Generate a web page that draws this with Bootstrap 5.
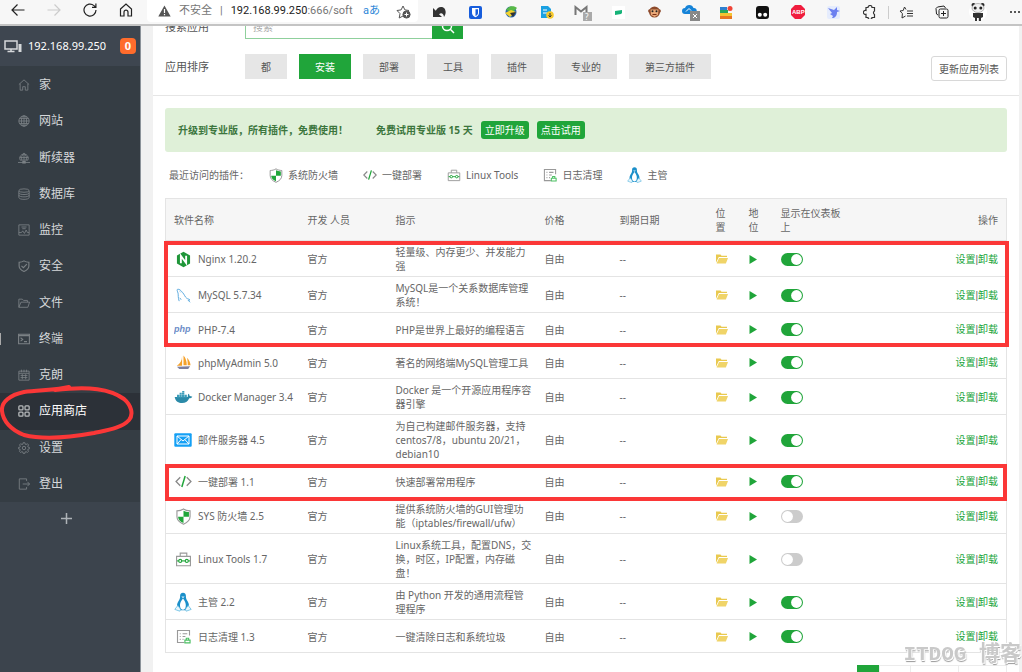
<!DOCTYPE html>
<html lang="zh-CN">
<head>
<meta charset="utf-8">
<meta name="viewport" content="width=device-width, initial-scale=1">
<title>软件商店</title>
<link href="https://cdn.jsdelivr.net/npm/bootstrap@5.3.0/dist/css/bootstrap.min.css" rel="stylesheet">
<style>
  :root { --green: #20a53a; --line: #e4e4e4; --red: #fb3737; }
  body { height: 100vh; overflow: hidden; font: 10px/14px "Noto Sans", "Noto Sans CJK SC", sans-serif; color: #666; background: #f1f1f1; }
  svg { display: block; flex: none; }
  a { text-decoration: none; }
  button { font: inherit; line-height: 14px; }

  /* browser bar */
  .chrome { height: 26px; background: #f7f7f7; border-bottom: 2px solid #c4c4c4; flex: none; }
  .chrome button { border: 0; background: none; padding: 0; height: 20px; color: #222; display: flex; align-items: center; justify-content: center; }
  .nav-btns { width: 144px; }
  .nav-btns button { width: 36px; }
  .address { flex: 253 1 0; height: 22px; margin-left: 3px; padding: 0 7px 0 11px; border-radius: 0 0 4px 4px; font: 11px/14px Roboto, "Noto Sans CJK SC", sans-serif; color: #767676; white-space: nowrap; }
  .address b { font-weight: 400; color: #222; }
  .translate { color: #2c86d8; }
  .exts { flex: 600 1 0; padding-left: 4px; }
  .exts button { flex: 1 1 0; }
  .exts button:last-child { flex: 0 0 26px; justify-content: flex-end; }
  .exts .after-sep { border-left: 1px solid #ccc; height: 13px; }

  /* sidebar */
  .side { width: 141px; flex: none; background: #3c444d; border-right: 1px solid #8b9299; position: relative; }
  .side-head { height: 40px; padding: 0 4px; gap: 6px; background: #3e4650; font-size: 11px; color: #fff; }
  .count { width: 16px; height: 16px; line-height: 16px; border-radius: 4px; background: #ff6c2c; font-weight: 700; text-align: center; }
  .menu { height: 436px; padding-top: 1px; background: #353d44; }
  .menu a { flex: 1 1 0; padding-left: 18px; gap: 9px; font-size: 12px; color: #d6d8da; position: relative; }
  .menu svg { color: #7b8185; width: 12px; height: 12px; }
  .menu a.on { background: #2c3138; color: #fff; }
  .menu a.on svg { color: #b6b9bb; }
  .menu a.tick::before { content: ""; position: absolute; left: 0; width: 1px; height: 12px; background: #aaa; }
  .plus { width: 100%; height: 32px; border: 0; background: none; padding: 0 8px 0 0; display: flex; align-items: center; justify-content: center; }
  .ring { position: absolute; left: -2px; top: 356px; pointer-events: none; }

  /* content */
  .panel { margin: 0 3px 0 12px; background: #fff; min-width: 0; }
  .head-area { padding: 0 12px 14px; margin-top: -12px; border-bottom: 1px solid #e6e6e6; }
  .lbl { width: 80px; font-size: 11px; line-height: 25px; color: #555; }
  .search input { width: 187px; height: 25px; border: 1px solid #8fd09c; border-right: 0; padding: 0 7px; font-size: 10px; outline: 0; }
  .search input::placeholder { color: #aaa; }
  .search button { width: 31px; height: 25px; border: 0; background: var(--green); display: flex; align-items: center; justify-content: center; padding: 0; }
  .sorting { margin-top: 15px; }
  .filters { gap: 12px; }
  .filters button { border: 0; height: 25px; padding: 0 16px; background: #e6e6e6; color: #555; }
  .filters button.on { background: var(--green); color: #fff; }
  .refresh { height: 25px; margin-top: 2px; padding: 0 7px; border: 1px solid #d8d8d8; border-radius: 3px; background: #fff; color: #555; }
  .body-area { padding: 12px; }
  .promo { height: 44px; padding: 0 13px; background: #dff0d8; border-radius: 3px; color: #3c763d; font-weight: 700; }
  .trial { margin: 0 8px 0 28px; }
  .promo button { height: 18px; padding: 0 4px; border: 0; border-radius: 3px; background: var(--green); color: #fff; font-weight: 400; line-height: 18px; }
  .recent { height: 46px; padding-left: 4px; gap: 25px; }
  .recent > span { width: 75px; white-space: nowrap; }
  .recent a { color: #666; gap: 5px; }
  .soft { table-layout: fixed; width: 100%; border: 1px solid var(--line); border-collapse: collapse; }
  .soft th { height: 42px; background: #f6f6f6; font-weight: 400; padding: 0 8px; }
  .soft td { padding: 4px 0 3px 8px; height: 33px; border-top: 1px solid var(--line); vertical-align: middle; white-space: nowrap; }
  .soft td:last-child { padding-right: 8px; }
  .soft td a { color: var(--green); }
  .bar { font-family: "Liberation Sans", sans-serif; }
  .ic { width: 18px; height: 18px; display: flex; align-items: center; justify-content: center; margin: -2px 6px -2px 0; }
  .soft td .form-check-input { appearance: none; width: 22px; height: 13px; margin: 0; border: 0; border-radius: 7px; display: block; float: none; box-shadow: none;
    background: #ccc url("data:image/svg+xml,%3Csvg xmlns='http://www.w3.org/2000/svg' viewBox='0 0 12 12'%3E%3Ccircle cx='6' cy='6' r='5' fill='white'/%3E%3C/svg%3E") left center / 13px 13px no-repeat; }
  .soft td .form-check-input:checked { background-color: var(--green); background-position: right center; }
  .frame-red { position: absolute; border: 4px solid var(--red); pointer-events: none; }
  .frame-a { left: -1px; right: -2px; top: 43px; height: 106px; }
  .frame-b { left: 0; right: 0; top: 266px; height: 37px; }
  .pages { margin-top: 12px; }
  .pages a { border: 1px solid #ececec; height: 28px; line-height: 28px; text-align: center; color: #666; margin-left: -1px; width: 49px; }
  .pages a.on { background: var(--green); border-color: var(--green); color: #fff; width: 23px; }
  .pages a.next { width: 32px; }
  .stamp { position: fixed; right: 1px; bottom: 5px; font: 700 21px/24px "Liberation Mono", "Noto Sans CJK SC", monospace; color: #c9c9c9; text-shadow: 1px 1px 0 #fff, -1px -1px 0 #fff, 1px 2px 1px #999; white-space: nowrap; }
</style>
</head>
<body class="d-flex flex-column">

<svg width="0" height="0" class="position-absolute" aria-hidden="true">
  <symbol id="shield" viewBox="0 0 16 18"><path d="M8 1C6 2.400 3.500 2.900 1 3v6c0 4 3 6.500 7 8.200C12 15.500 15 13 15 9V3C12.500 2.900 10 2.400 8 1z" fill="#fff" stroke="#999" stroke-width="1.200"/><path d="M8 2.800c1.700.9 3.700 1.300 5.800 1.400v5H8zM2.200 9.200H8V16c-3.500-1.600-5.700-3.600-5.800-6.800z" fill="#20a53a"/></symbol>
  <symbol id="code" viewBox="0 0 18 14"><path d="M5.500 2.500L1 7l4.500 4.500M12.500 2.500L17 7l-4.500 4.500" fill="none" stroke="#888" stroke-width="1.400"/><path d="M10.800 1L7.200 13" stroke="#20a53a" stroke-width="1.600"/></symbol>
  <symbol id="box" viewBox="0 0 18 16"><path d="M1.600 4.600h14.800v10H1.600zM5.500 4.500V1.200h7v3.300" fill="#fff" stroke="#999" stroke-width="1.200"/><path d="M2 9.500h14" stroke="#20a53a" stroke-width="1.200"/><circle cx="5.500" cy="9.500" r="1.600" fill="#fff" stroke="#20a53a" stroke-width="1.200"/><circle cx="12.500" cy="9.500" r="1.600" fill="#fff" stroke="#20a53a" stroke-width="1.200"/></symbol>
  <symbol id="log" viewBox="0 0 16 16"><path d="M9 14.400H1.600V1.600h12.800V7M4 5h1m2 0h5M4 8h1m2 0h3M4 11h1m2 0h1" fill="none" stroke="#999" stroke-width="1.200"/><path d="M9.500 14.800v-3h5.500v3zM11 11.500V9.800h2.500v1.700" fill="#fff" stroke="#4cc063" stroke-width="1.200"/></symbol>
  <symbol id="tux" viewBox="0 0 18 20"><path d="M9 .8c-2 0-3 1.400-2.900 3.200.1 2.200-.5 3.300-1.700 5.200C3.200 11 2.800 13 3.200 15l3 3.300h5.600l3-3.300c.4-2 0-4-1.200-5.800-1.200-1.900-1.800-3-1.700-5.200C12 2.200 11 .8 9 .8z" fill="#1b8fc9"/><path d="M9 6.500C7.200 9 5.700 11 6 14c.3 2.600 1.500 3.700 3 3.700s2.500-1.100 2.800-3.700C12 11 10.800 9 9 6.500z" fill="#fff"/><path d="M3.800 13.500L.8 17.400l5 1.800.8-2zM14.200 13.500l3 3.900-5 1.800-.8-2z" fill="#e9f6fc" stroke="#65bce2" stroke-width=".8"/><path d="M7.300 4.500h3.400L9 6.200z" fill="#d9f0fa"/></symbol>
  <symbol id="nginx" viewBox="0 0 16 18"><path d="M8 .7l7 4v8.600l-7 4-7-4V4.700z" fill="#1f9639"/><path d="M5.200 13V5.200l5.600 7.500V5" fill="none" stroke="#fff" stroke-width="2"/></symbol>
  <symbol id="mysql" viewBox="0 0 16 16"><path d="M3.400 14C2 10 2.600 8 2.200 5.500 1.500 3.500.7 2 1.600 1.400 3.500.8 5.500 3 7 4.800c2 2.200 2.700 5 4.500 6.200 1 .8 2.800.7 3.400 1.800l-2 .3L15 15.200M4 10.500l1.500 2M4.200 3.800l.8.800" fill="none" stroke="#55a6dd"/></symbol>
  <symbol id="php" viewBox="0 0 18 12"><text x="0" y="8" font-family="Liberation Sans" font-size="9" font-weight="700" font-style="italic" fill="#6c8cc7">php</text></symbol>
  <symbol id="pma" viewBox="0 0 16 16"><path d="M6.500 1C6.500 6 4.500 9 .8 11.500h5.700zM8 .5V11h3.500C11.500 7 10.500 3 8 .5zM11.500 3c1 2.500 1 5.500 1 8h3C15.300 8 14 5 11.500 3z" fill="#f5a12a"/><path d="M1 12.600l14-.6-2 2.800H3.500z" fill="#7d7f9e"/></symbol>
  <symbol id="docker" viewBox="0 0 20 14"><path d="M.5 6.500h14c.3-1.500 0-2.500.8-3.600 1 .7 1.300 1.600 1.300 2.500 1 0 2 .2 2.900.7-.7 1.200-2 1.600-3.300 1.600C14.500 11.300 12 13 8.500 13 4.500 13 1.500 11.500.5 6.500z" fill="#2b8aa8"/><path d="M3 4h2.300v3H3zM5.600 4h2.500v3H5.600zM8.400 4h2.500v3H8.400zM11.200 4h2.400v3h-2.400zM5.800 1.800h2.300v2H5.800zM8.400 1.800h2.500v2H8.400zM8.600 0h2.300v1.600H8.600z" fill="#3c9dba"/></symbol>
  <symbol id="mail" viewBox="0 0 18 14"><rect x=".3" y=".3" width="17.400" height="13.400" rx="1" fill="#14a0f5"/><path d="M3 3l6 5 6-5M3 11l4-4.300M15 11l-4-4.300M3 3h12v8H3z" fill="none" stroke="#fff"/></symbol>
  <symbol id="folder" viewBox="0 0 12 10"><path d="M0 8.800V.5h4.500l1 1.300H11V3H2.800z" fill="#e9c94f"/><path d="M3.100 3.900H12L9.900 9.500H.6z" fill="#f0d468"/></symbol>
  <symbol id="play" viewBox="0 0 8 9"><path d="M.5 0L8 4.500.5 9z" fill="#20a53a"/></symbol>
</svg>

<header class="chrome d-flex">
  <div class="nav-btns d-flex">
    <button aria-label="后退"><svg width="14" height="14" fill="none" stroke="#222" stroke-width="1.200"><path d="M13.500 7H1.200M6.500 1.500L1 7l5.500 5.500"/></svg></button>
    <button aria-label="前进"><svg width="14" height="14" fill="none" stroke="#ccc" stroke-width="1.200"><path d="M.5 7h12.300M7.500 1.500L13 7l-5.500 5.500"/></svg></button>
    <button aria-label="刷新"><svg width="14" height="14" fill="none" stroke="#222" stroke-width="1.200"><path d="M13 7A6 6 0 1 1 11 2.600L12.800 4.200M12.900.5v3.900H9"/></svg></button>
    <button aria-label="主页"><svg width="14" height="14" fill="none" stroke="#222" stroke-width="1.200"><path d="M1.500 6L7 1l5.500 5v7H9V9.200a2 2 0 0 0-4 0V13H1.500z"/></svg></button>
  </div>
  <div class="address d-flex align-items-center bg-white">
    <svg width="13" height="12"><path d="M6.500.5l6.200 11H.3z" fill="#555"/><path d="M6.500 4v4M6.500 9v1.300" stroke="#fff" stroke-width="1.200"/></svg>
    <span class="ms-2">不安全</span><span class="mx-1 px-1">|</span>
    <span class="flex-fill"><b>192.168.99.250</b>:666/soft</span>
    <span class="translate">aあ</span>
    <svg class="ms-3" width="15" height="15" fill="none" stroke="#555"><path d="M7 12L3.200 14l.8-4.400L1 6.500l4.100-.6L7 2l1.900 3.900 4.100.6"/><circle cx="10.500" cy="10.500" r="3.600" fill="#555"/><path d="M10.500 8.500v4M8.500 10.500h4" stroke="#fff"/></svg>
  </div>
  <div class="exts d-flex align-items-center">
    <button aria-label="撤销"><svg width="15" height="12"><path d="M1 2v9h9L7 8.300c2-1.800 4.500-1.200 5 2.700C15.500 5.500 13 1 9 1 6.500 1 5 2.500 3.800 4.800z" fill="#333"/></svg></button>
    <button aria-label="密码"><svg width="13" height="13"><rect width="13" height="13" rx="2" fill="#175ddc"/><path d="M3 2h7v5c0 2-1.500 3.200-3.500 4.200C4.500 10.200 3 9 3 7z" fill="#fff"/><path d="M6.500 3.200H9V7c0 1.300-1 2.200-2.500 3z" fill="#175ddc"/></svg></button>
    <button aria-label="下载"><svg width="15" height="14"><circle cx="7" cy="7" r="5.500" fill="#2766b0"/><path d="M2 5c2-4 8-5 11-2L9 7 5 6z" fill="#58b947"/><path d="M1 8l6-3 5 2-6 5z" fill="#f2d22e"/><path d="M6 8l6-1-3 5z" fill="#333"/></svg></button>
    <button aria-label="文档"><svg width="14" height="14"><path d="M1 1h7l3 3v9H1z" fill="#1ba1e2"/><path d="M3 5h4M3 8h4" stroke="#fff"/><circle cx="10" cy="10" r="3.800" fill="#f7c92c"/><path d="M10 8v4M8.500 10.500L10 12l1.500-1.500" fill="none" stroke="#333"/></svg></button>
    <button aria-label="邮件"><svg width="18" height="18"><path d="M1.500 12V4L7 8.500 12.500 4v8" fill="none" stroke="#777" stroke-width="2"/><rect x="9" y="9" width="9" height="9" fill="#aaa"/><text x="11" y="17" font-size="8" fill="#fff">?</text></svg></button>
    <button aria-label="翻译"><svg width="13" height="13"><rect width="13" height="13" fill="#fff"/><path d="M3 5l7-1v3L9 8 3 9z" fill="#16b378"/></svg></button>
    <button aria-label="脚本"><svg width="13" height="14"><circle cx="1.800" cy="6" r="1.700" fill="#8d4a2b"/><circle cx="11.200" cy="6" r="1.700" fill="#8d4a2b"/><circle cx="6.500" cy="7" r="5.500" fill="#8d4a2b"/><path d="M2.500 4.500h8l-.5 5.500-3.500 2L3 10z" fill="#e9a978"/><circle cx="4.500" cy="6.300" r="1" fill="#222"/><circle cx="8.500" cy="6.300" r="1" fill="#222"/><path d="M4.500 9.500h4" stroke="#7a2e17"/></svg></button>
    <button aria-label="云"><svg width="19" height="17"><path d="M4 10a3 3 0 0 1 0-6 4.500 4.500 0 0 1 8.500 0A3 3 0 0 1 13 10z" fill="#1583d8"/><path d="M5 7.500l3-3 2 2" fill="none" stroke="#fff"/><rect x="9" y="7" width="10" height="10" fill="#888"/><path d="M12 10l4 4m0-4l-4 4" stroke="#fff"/></svg></button>
    <button aria-label="标签"><svg width="14" height="13"><path d="M1 1h7v3H1z" fill="#2f80d0"/><path d="M1 4h8v3H1z" fill="#2aa65a"/><path d="M1 7h12v3H1z" fill="#f5c331"/><path d="M1 10h12v3H1z" fill="#e87722"/><circle cx="11" cy="2.500" r="2.500" fill="#f04438"/></svg></button>
    <button aria-label="油猴"><svg width="13" height="13"><rect width="13" height="13" rx="3" fill="#111"/><circle cx="3.800" cy="8.800" r="2" fill="#fff"/><circle cx="9.200" cy="8.800" r="2" fill="#fff"/></svg></button>
    <button aria-label="ABP"><svg width="14" height="14"><path d="M4 0h6l4 4v6l-4 4H4l-4-4V4z" fill="#f01d3e"/><text x="1" y="9" font-family="Liberation Sans" font-size="6" font-weight="700" fill="#fff">ABP</text></svg></button>
    <button aria-label="飞鸟"><svg width="13" height="13"><rect width="13" height="13" rx="2" fill="#e5ecfd"/><path d="M1 2l6 2 3-3v3l3 1-3 1c0 4-2 6-5 6l1-2-3-2 2-1z" fill="#6b7ff0"/></svg></button>
    <button aria-label="扩展"><svg width="13" height="14" fill="none" stroke="#333" stroke-width="1.200"><path d="M3 2.500h2a2 2 0 0 1 4 0h2.500V6a2 2 0 0 0 0 3.500v3H9a2 2 0 0 1-4 0H3V9.300A2 2 0 1 1 3 5.500z"/></svg></button>
    <button class="after-sep" aria-label="收藏夹"><svg width="14" height="13" fill="none" stroke="#333"><path d="M7 3.500L5.500 1 4.200 4.500 1 5l2.400 2.600L3 12l3.500-2M8 5h6M8 7.500h6M8 10h6"/></svg></button>
    <button aria-label="集锦"><svg width="14" height="14" fill="none" stroke="#222"><rect x="4" y="4" width="9" height="9" rx="1.500"/><path d="M8.500 6v5M6 8.500h5M3 10L1.500 9 1 3.500 2.500 2 9 1l1.500 2"/></svg></button>
    <button aria-label="用户"><svg width="18" height="20"><circle cx="9" cy="10" r="9" fill="#fff"/><circle cx="4.500" cy="3" r="2" fill="#222"/><circle cx="13.500" cy="3" r="2" fill="#222"/><ellipse cx="9" cy="6" rx="6" ry="4.500" fill="#f0f0f0" stroke="#888" stroke-width=".6"/><circle cx="6.200" cy="6" r="1.500" fill="#222"/><circle cx="11.800" cy="6" r="1.500" fill="#222"/><path d="M4 11h10v4l-2 1v3H9.800v-3H8v3H6v-3l-2-1z" fill="#333"/></svg></button>
    <button aria-label="更多"><svg width="13" height="4" fill="#222"><circle cx="2" cy="2" r="1"/><circle cx="6" cy="2" r="1"/><circle cx="10" cy="2" r="1"/></svg></button>
  </div>
</header>

<div class="d-flex flex-fill overflow-hidden">
  <nav class="side">
    <div class="side-head d-flex align-items-center">
      <svg width="18" height="14" fill="none" stroke="#d5d8da" stroke-width="1.500"><path d="M1 2h12v8H1zM7 10v2.500M3.500 12.500h7"/><path d="M14.500 5h3v8h-3z" fill="#d5d8da" stroke="none"/></svg>
      <span class="flex-fill">192.168.99.250</span><span class="count">0</span>
    </div>
    <div class="menu d-flex flex-column" id="menu"></div>
    <button class="plus" aria-label="添加"><svg width="11" height="11"><path d="M5.500 0v11M0 5.500h11" stroke="#aeb3b8" stroke-width="1.500"/></svg></button>
    <svg class="ring" width="140" height="60" fill="none" stroke="#fb3737" stroke-width="4" stroke-linecap="round"><path d="M71 5C60 8 40 8 26 10 12 13 3 20 4 29c1 10 9 19 22 24 20 5 48 2 70-2 14-3 28-5 35-13 5-6 2-15-5-21C112 7 92 4 57 8"/></svg>
  </nav>

  <main class="panel flex-fill">
    <section class="head-area">
      <div class="search d-flex align-items-center">
        <label class="lbl" for="q">搜索应用</label><input id="q" type="text" placeholder="搜索"><button aria-label="搜索"><svg width="14" height="14" fill="none" stroke="#fff" stroke-width="1.500"><circle cx="6" cy="6" r="4.500"/><path d="M9.300 9.300L13 13"/></svg></button>
      </div>
      <div class="sorting d-flex align-items-start">
        <span class="lbl">应用排序</span>
        <div class="filters d-flex flex-fill">
          <button>都</button><button class="on">安装</button><button>部署</button><button>工具</button><button>插件</button><button>专业的</button><button>第三方插件</button>
        </div>
        <button class="refresh">更新应用列表</button>
      </div>
    </section>

    <section class="body-area">
      <div class="promo d-flex align-items-center">
        <span>升级到专业版，所有插件，免费使用！</span><span class="trial">免费试用专业版 15 天</span>
        <button class="me-2">立即升级</button><button>点击试用</button>
      </div>
      <div class="recent d-flex align-items-center">
        <span>最近访问的插件：</span>
        <a href="#" class="d-flex align-items-center"><svg width="14" height="15"><use href="#shield"/></svg>系统防火墙</a>
        <a href="#" class="d-flex align-items-center"><svg width="14" height="12"><use href="#code"/></svg>一键部署</a>
        <a href="#" class="d-flex align-items-center"><svg width="14" height="13"><use href="#box"/></svg>Linux Tools</a>
        <a href="#" class="d-flex align-items-center"><svg width="14" height="14"><use href="#log"/></svg>日志清理</a>
        <a href="#" class="d-flex align-items-center"><svg width="15" height="18"><use href="#tux"/></svg>主管</a>
      </div>
      <div class="position-relative">
        <table class="soft">
          <colgroup><col style="width:134px"><col style="width:88px"><col style="width:149px"><col style="width:75px"><col style="width:96px"><col style="width:33px"><col style="width:32px"><col style="width:83px"><col></colgroup>
          <thead><tr><th>软件名称</th><th>开发 人员</th><th>指示</th><th>价格</th><th>到期日期</th><th>位置</th><th>地位</th><th>显示在仪表板上</th><th class="text-end">操作</th></tr></thead>
          <tbody id="rows"></tbody>
        </table>
        <div class="frame-red frame-a"></div>
        <div class="frame-red frame-b"></div>
      </div>
      <nav class="pages d-flex justify-content-end" aria-label="分页"><a href="#" class="on">1</a><a href="#" class="next"></a><a href="#"></a><a href="#"></a></nav>
    </section>
  </main>
</div>
<div class="stamp">ITDOG 博客</div>

<script src="https://cdn.jsdelivr.net/npm/bootstrap@5.3.0/dist/js/bootstrap.bundle.min.js"></script>
<script>
  const menu = [
    ['家', '<path d="M1 6.500L7 1l6 5.500M2.500 5.500V13H5.500V9h3v4h3V5.500"/>'],
    ['网站', '<circle cx="7" cy="7" r="6"/><ellipse cx="7" cy="7" rx="3" ry="6"/><path d="M7 1v12M1 7h12M2 4h10M2 10h10"/>'],
    ['断续器', '<path d="M2.500 9.500a5 5 0 1 1 9 0zM7 1v9M2 6.500h10M4.500 9.500c-1-3 0-6 2.500-8 2.500 2 3.500 5 2.500 8M0 12.200h14" /><path d="M5 12h4" stroke-width="3"/>'],
    ['数据库', '<ellipse cx="7" cy="3" rx="6" ry="2"/><path d="M1 3v8c0 3 12 3 12 0V3M1 5.700c0 2.600 12 2.600 12 0M1 8.400c0 2.600 12 2.600 12 0"/>'],
    ['监控', '<path d="M1 1h12v12H1zM1 10h3l1.500-2 2 3 2-4 1.500 3h2M4 3.500h6M5 5.500h4"/>'],
    ['安全', '<path d="M7 1C5 2.300 3 2.600 1.300 2.700V7c0 3.300 2.500 5 5.700 6.300 3.200-1.300 5.700-3 5.700-6.300V2.700C11 2.600 9 2.300 7 1zM4 6.800L6.300 9l4-4.300" stroke-width="1.300"/>'],
    ['文件', '<path d="M1 12V2.500h4L6.500 4H11v2M1 12l2.500-6H13.500L11.500 12z"/>'],
    ['终端', '<path d="M.7 1.500h12.600v11H.7zM.7 3h12.600M3 5.500L5.500 7.500 3 9.500M7 10h3.500" stroke-width="1.300"/>'],
    ['克朗', '<path d="M1 2.500h12v10.500H1zM1 5h12M4 .8v3M7 .8v3M10 .8v3M3 7.500h8M3 10h8M5 6v6M9 6v6"/>'],
    ['应用商店', '<g stroke-width="1.500"><rect x="1" y="1" width="4.800" height="4.800" rx="1"/><rect x="8.200" y="1" width="4.800" height="4.800" rx="1"/><rect x="1" y="8.200" width="4.800" height="4.800" rx="1"/><rect x="8.200" y="8.200" width="4.800" height="4.800" rx="1"/></g>'],
    ['设置', '<circle cx="7" cy="7" r="2"/><path d="M6 .8h2l.4 1.800 1 .4L11 2l1.300 1.400-.9 1.600.4 1 1.500.3v1.600l-1.500.4-.5 1 1 1.600L11 12.200l-1.600-1-1 .4L8 13.300H6l-.4-1.700-1-.4-1.600 1L1.700 11l.9-1.700-.4-1L.7 8V6.200L2.300 6l.5-1-1-1.600L3.100 2l1.600 1 1-.4z"/>'],
    ['登出', '<path d="M10 3.500V1H1.500v12H10v-2.500M5.500 7h8M11 4.500L13.500 7 11 9.500"/>']
  ];
  document.getElementById('menu').innerHTML = menu.map(([name, icon]) =>
    `<a href="#" class="d-flex align-items-center ${name === '应用商店' ? 'on' : ''} ${name === '终端' ? 'tick' : ''}"><svg viewBox="0 0 14 14" fill="none" stroke="currentColor">${icon}</svg>${name}</a>`).join('');

  // icon, icon width, icon height, name, description, shown on dashboard
  const rows = [
    ['nginx', 15, 17, 'Nginx 1.20.2', '轻量级、内存更少、并发能力<br>强', 1],
    ['mysql', 15, 15, 'MySQL 5.7.34', 'MySQL是一个关系数据库管理<br>系统！', 1],
    ['php', 18, 12, 'PHP-7.4', 'PHP是世界上最好的编程语言', 1],
    ['pma', 15, 15, 'phpMyAdmin 5.0', '著名的网络端MySQL管理工具', 1],
    ['docker', 19, 13, 'Docker Manager 3.4', 'Docker 是一个开源应用程序容<br>器引擎', 1],
    ['mail', 18, 14, '邮件服务器 4.5', '为自己构建邮件服务器，支持<br>centos7/8，ubuntu 20/21，<br>debian10', 1],
    ['code', 17, 13, '一键部署 1.1', '快速部署常用程序', 1],
    ['shield', 15, 17, 'SYS 防火墙 2.5', '提供系统防火墙的GUI管理功<br>能（iptables/firewall/ufw）', 0],
    ['box', 17, 15, 'Linux Tools 1.7', 'Linux系统工具，配置DNS，交<br>换，时区，IP配置，内存磁<br>盘！', 0],
    ['tux', 18, 20, '主管 2.2', '由 Python 开发的通用流程管<br>理程序', 1],
    ['log', 15, 15, '日志清理 1.3', '一键清除日志和系统垃圾', 1]
  ];
  document.getElementById('rows').innerHTML = rows.map(([id, w, h, name, desc, on]) => `<tr>
    <td><div class="d-flex align-items-center"><span class="ic"><svg width="${w}" height="${h}"><use href="#${id}"/></svg></span><span>${name}</span></div></td>
    <td>官方</td><td>${desc}</td><td>自由</td><td>--</td>
    <td><svg width="12" height="10"><use href="#folder"/></svg></td>
    <td><svg width="8" height="9"><use href="#play"/></svg></td>
    <td><input class="form-check-input" type="checkbox" role="switch" aria-label="${name} 显示在仪表板上" ${on ? 'checked' : ''}></td>
    <td class="text-end"><a href="#">设置</a><span class="bar">|</span><a href="#">卸载</a></td></tr>`).join('');
</script>
</body>
</html>
